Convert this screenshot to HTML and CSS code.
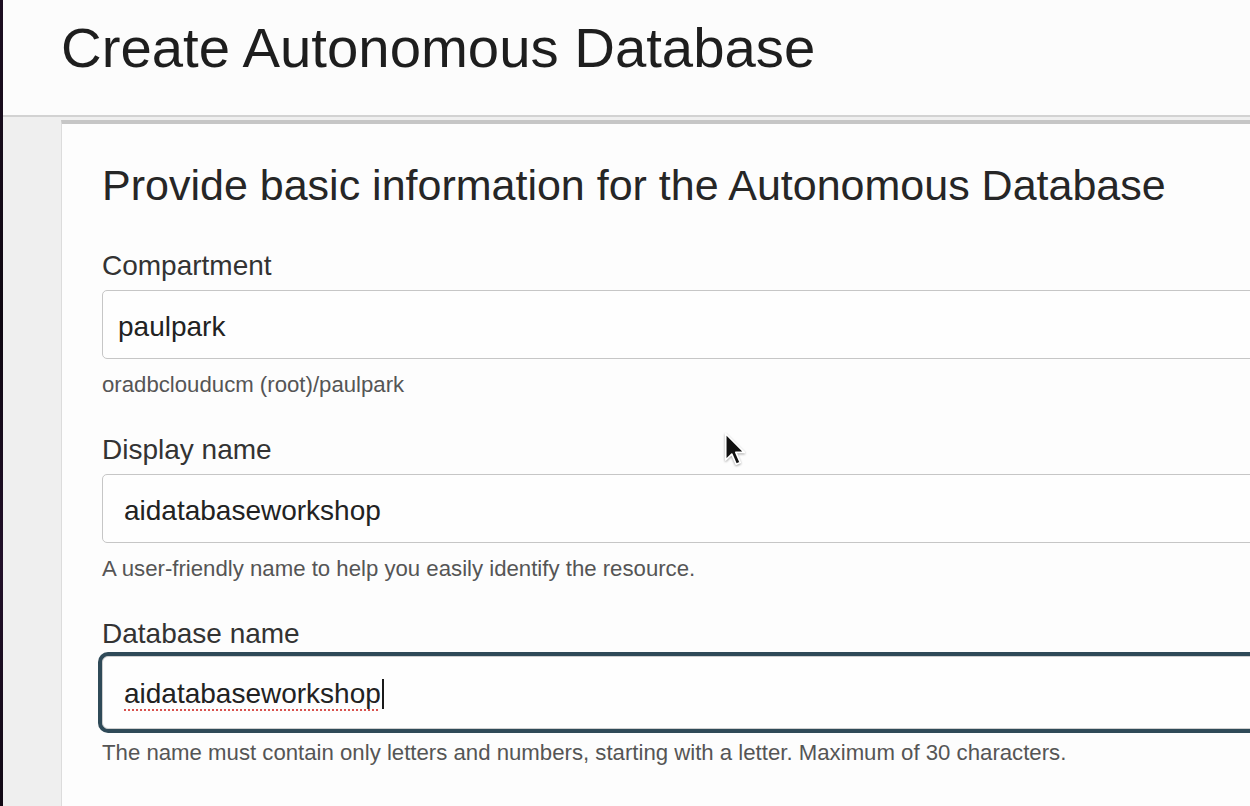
FILE: index.html
```html
<!DOCTYPE html>
<html lang="en">
<head>
<meta charset="utf-8">
<title>Create Autonomous Database</title>
<link rel="stylesheet" href="styles.css">
</head>
<body>
<div class="screen">
  <div class="edge"></div>
  <div class="app">
    <header class="page-header">
      <h1 class="page-title">Create Autonomous Database</h1>
    </header>
    <main class="content">
      <section class="card">
        <h2 class="section-title">Provide basic information for the Autonomous Database</h2>

        <div class="field">
          <div class="label">Compartment</div>
          <div class="control control-select"><span class="value">paulpark</span></div>
          <div class="help">oradbclouducm (root)/paulpark</div>
        </div>

        <div class="field">
          <div class="label">Display name</div>
          <div class="control"><span class="value">aidatabaseworkshop</span></div>
          <div class="help">A user-friendly name to help you easily identify the resource.</div>
        </div>

        <div class="field">
          <div class="label">Database name</div>
          <div class="control control-focus"><span class="value misspelled">aidatabaseworkshop</span><span class="caret"></span></div>
          <div class="help">The name must contain only letters and numbers, starting with a letter. Maximum of 30 characters.</div>
        </div>
      </section>
    </main>
  </div>
  <svg class="pointer" width="22" height="34" viewBox="0 0 13 20" aria-hidden="true">
    <path d="M1 1 L1 16.5 L4.6 13 L7.2 19 L9.6 18 L7 12 L12 12 Z" fill="#111" stroke="#fff" stroke-width="1" stroke-linejoin="round"/>
  </svg>
</div>
</body>
</html>
```

FILE: styles.css
```css
html, body {
  margin: 0;
  padding: 0;
  width: 1250px;
  height: 806px;
  overflow: hidden;
  background: #efefef;
  font-family: "Liberation Sans", Arial, Helvetica, sans-serif;
}

.screen {
  position: relative;
  display: flex;
  width: 1250px;
  height: 806px;
}

.edge {
  width: 3px;
  flex: none;
  background: linear-gradient(180deg, #1d0f22 0%, #0e0711 40%, #22102a 70%, #110914 100%);
}

.app {
  flex: 1;
  display: flex;
  flex-direction: column;
  min-width: 0;
}

.page-header {
  background: #fcfcfc;
  padding: 16px 0 35px 58px;
  border-bottom: 2px solid #d2d2d2;
}

.page-title {
  margin: 0;
  font-size: 56.3px;
  line-height: 64px;
  font-weight: 400;
  color: #1e1e1e;
}

.content {
  flex: 1;
  padding: 3px 0 0 58px;
}

.card {
  background: #fdfdfd;
  border-top: 4px solid #c6c6c6;
  border-left: 1px solid #dcdcdc;
  width: calc(100% + 60px);
  height: 100%;
  padding: 36px 0 0 40px;
  box-sizing: border-box;
}

.section-title {
  margin: 0 0 40px;
  font-size: 43px;
  line-height: 50px;
  font-weight: 400;
  color: #262626;
}

.field {
  display: flex;
  flex-direction: column;
  margin-bottom: 35px;
}

.label {
  font-size: 28px;
  line-height: 32px;
  color: #333;
  margin-bottom: 8px;
}

.control {
  height: 69px;
  box-sizing: border-box;
  border: 1px solid #c6c6c6;
  border-radius: 5px;
  background: #fefefe;
  display: flex;
  align-items: center;
  padding: 4px 0 0 21px;
  font-size: 28px;
  color: #222;
}

.control-select {
  padding-left: 15px;
}

.control-focus {
  border: 1px solid #cfcfcf;
  box-shadow: 0 0 0 4px #2f4a58;
  margin-top: -2px;
  margin-bottom: 4px;
  border-radius: 6px;
  height: 73px;
  padding-top: 2px;
}

.value {
  line-height: 34px;
}

.misspelled {
  text-decoration: underline dotted #d9534f;
  text-underline-offset: 7px;
  text-decoration-thickness: 2px;
}

.caret {
  width: 2px;
  height: 30px;
  background: #1a1a1a;
  margin-left: 1px;
}

.help {
  margin-top: 12px;
  font-size: 22.2px;
  line-height: 28px;
  color: #555;
}

.field:last-child .help {
  margin-top: 6px;
}

.pointer {
  position: absolute;
  left: 724px;
  top: 432px;
  filter: blur(0.4px) drop-shadow(0 1px 1px rgba(0,0,0,0.35));
}
```
